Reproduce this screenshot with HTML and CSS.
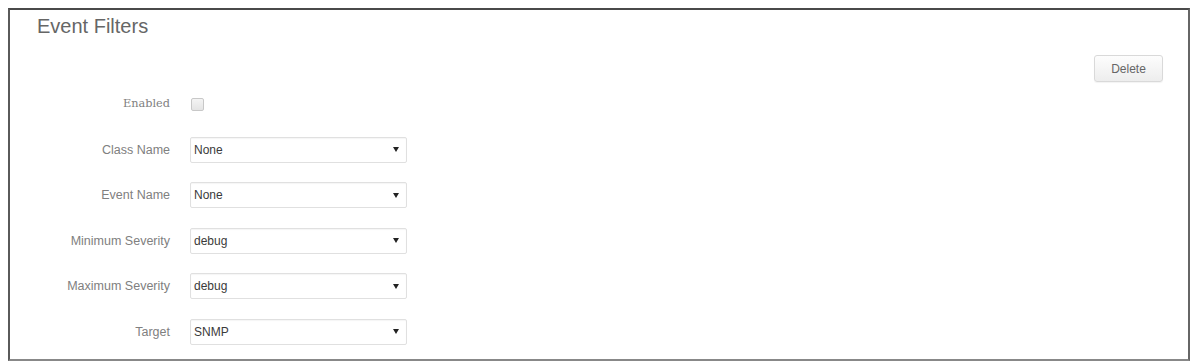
FILE: index.html
```html
<!DOCTYPE html>
<html>
<head>
<meta charset="utf-8">
<link rel="stylesheet" href="styles.css">
</head>
<body>
<div class="frame">
  <h2 class="title">Event Filters</h2>
  <div class="toolbar"><button class="btn">Delete</button></div>
  <div class="form">
    <div class="label serif">Enabled</div>
    <div class="control"><span class="checkbox"></span></div>

    <div class="label">Class Name</div>
    <div class="control"><div class="select"><span>None</span><span class="caret"></span></div></div>

    <div class="label">Event Name</div>
    <div class="control"><div class="select"><span>None</span><span class="caret"></span></div></div>

    <div class="label">Minimum Severity</div>
    <div class="control"><div class="select"><span>debug</span><span class="caret"></span></div></div>

    <div class="label">Maximum Severity</div>
    <div class="control"><div class="select"><span>debug</span><span class="caret"></span></div></div>

    <div class="label">Target</div>
    <div class="control"><div class="select"><span>SNMP</span><span class="caret"></span></div></div>
  </div>
</div>
</body>
</html>
```

FILE: styles.css
```css
html, body {
  margin: 0;
  padding: 0;
  background: #fff;
}
body {
  padding: 8px 3px 0 8px;
  font-family: "Liberation Sans", Arial, sans-serif;
  height: 362px;
  box-sizing: border-box;
  overflow: hidden;
}
.frame {
  border-top: 2px solid #4a4a4a;
  border-left: 2px solid #5a5a5a;
  border-right: 2px solid #666;
  border-bottom: 2px solid #888;
  height: 353px;
  box-sizing: border-box;
  padding: 5px 25px 0 0;
}
.title {
  margin: 0 0 0 27px;
  font-weight: normal;
  font-size: 20px;
  line-height: 22px;
  color: #666;
}
.toolbar {
  display: flex;
  justify-content: flex-end;
  margin-top: 18px;
}
.btn {
  width: 69px;
  height: 27px;
  border: 1px solid #d9d9d9;
  border-radius: 3px;
  background: linear-gradient(#fdfdfd, #ededed);
  box-shadow: 0 1px 1px rgba(0,0,0,0.05);
  color: #666;
  font-family: "Liberation Sans", Arial, sans-serif;
  font-size: 12px;
  padding: 0;
}
.form {
  display: grid;
  grid-template-columns: 160px 217px;
  column-gap: 20px;
  row-gap: 19.6px;
  margin-top: 9px;
  align-items: center;
}
.label {
  text-align: right;
  font-size: 12.5px;
  color: #808080;
  line-height: 26px;
}
.label.serif {
  font-family: "DejaVu Serif", "Liberation Serif", serif;
  font-size: 11.3px;
}
.control {
  height: 26px;
  display: flex;
  align-items: center;
}
.checkbox {
  display: block;
  width: 11px;
  height: 11px;
  margin-left: 1px;
  border: 1px solid #c8c8c8;
  border-radius: 2px;
  background: linear-gradient(#f4f4f4, #e4e4e4);
}
.select {
  width: 100%;
  height: 26px;
  box-sizing: border-box;
  border: 1px solid #e0e0e0;
  border-radius: 2px;
  box-shadow: inset 0 1px 1px rgba(0,0,0,0.04);
  display: flex;
  align-items: center;
  justify-content: space-between;
  padding: 0 7px 0 3px;
  font-size: 12px;
  color: #3a3a3a;
}
.caret {
  width: 0;
  height: 0;
  border-left: 3px solid transparent;
  border-right: 3px solid transparent;
  border-top: 5px solid #222;
}
```
